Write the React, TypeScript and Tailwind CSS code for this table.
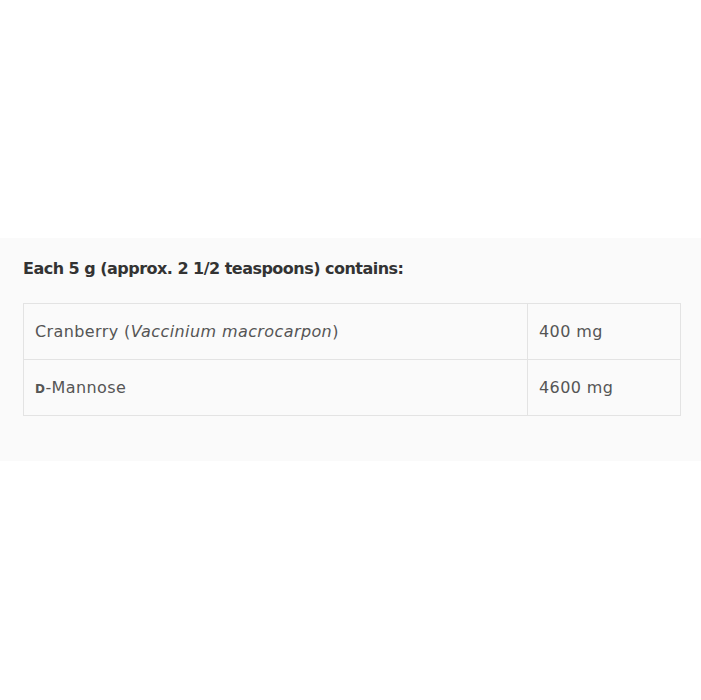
import React from "react";

export default function App() {
  return (
    <div className="w-[701px] h-[700px] bg-white flex flex-col" style={{ fontFamily: '"DejaVu Sans", sans-serif' }}>
      <div className="h-[238px]" />
      <div className="h-[223px] bg-[#fafafa] px-[23px] pt-[16px]">
        <h2 className="text-[16px] font-bold text-[#333] leading-[30px] tracking-[-0.52px]">
          Each 5 g (approx. 2 1/2 teaspoons) contains:
        </h2>
        <table className="mt-[19px] w-[658px] border-collapse text-[16px] text-[#555] tracking-[0.4px]">
          <tbody>
            <tr className="h-[56px]">
              <td className="border border-[#e3e3e3] px-[11px] w-[504px]">
                Cranberry (<i>Vaccinium macrocarpon</i>)
              </td>
              <td className="border border-[#e3e3e3] px-[11px]">400 mg</td>
            </tr>
            <tr className="h-[56px]">
              <td className="border border-[#e3e3e3] px-[11px]">
                <span className="text-[12px] font-bold">D</span>-Mannose
              </td>
              <td className="border border-[#e3e3e3] px-[11px]">4600 mg</td>
            </tr>
          </tbody>
        </table>
      </div>
    </div>
  );
}
